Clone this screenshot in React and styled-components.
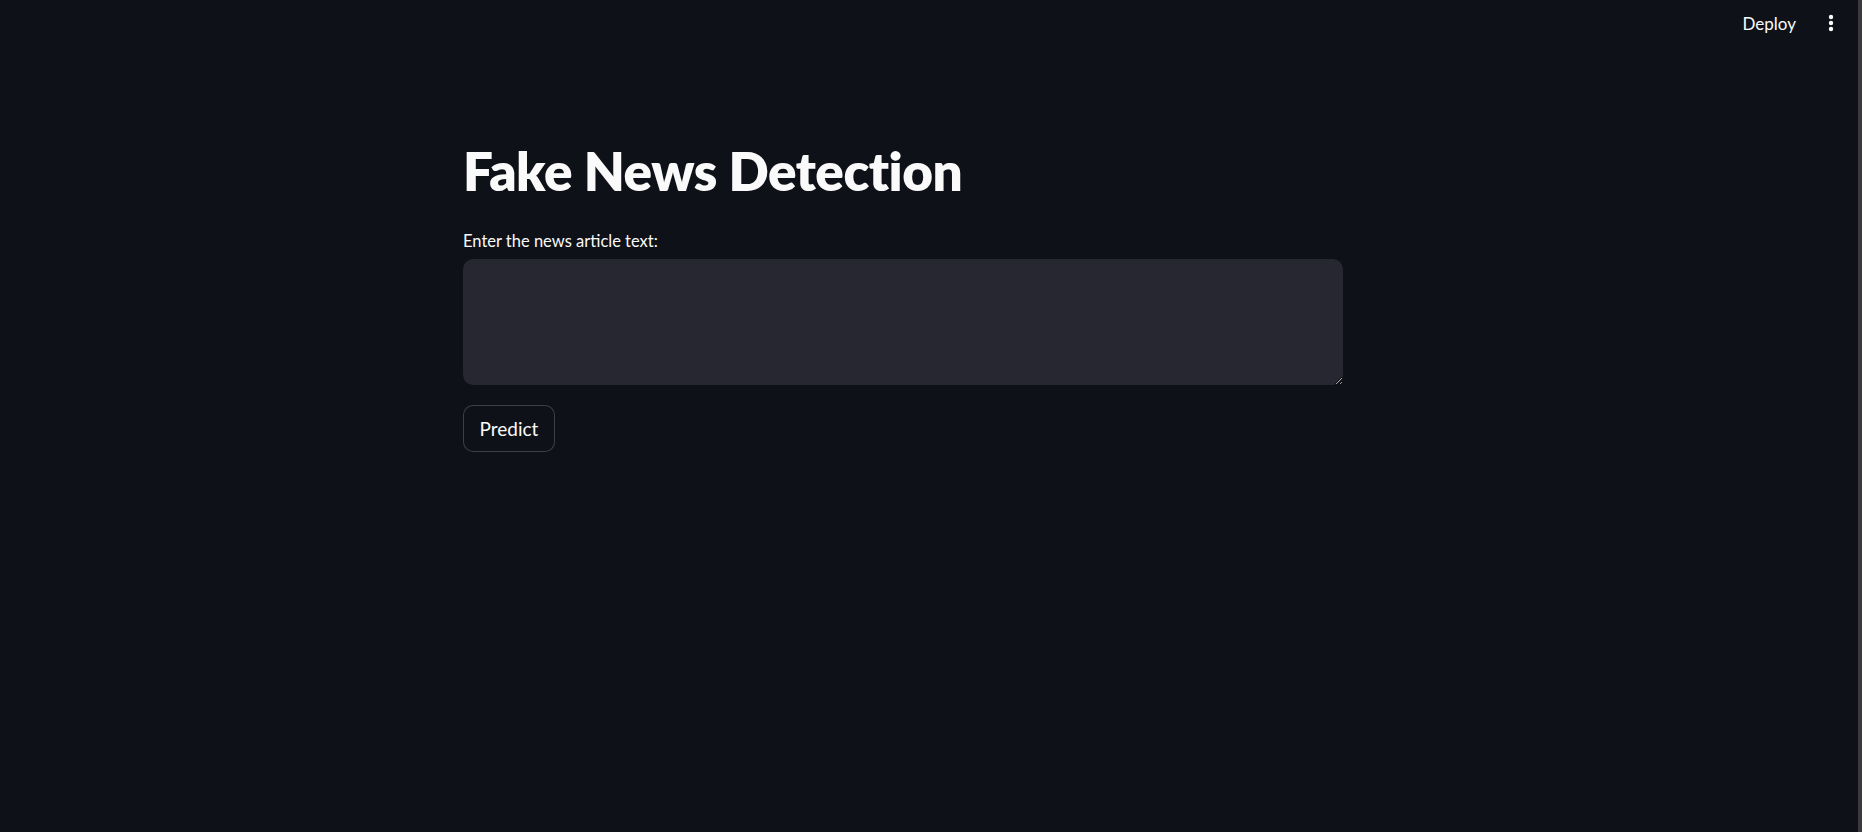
import React from "react";
import styled, { createGlobalStyle } from "styled-components";

const Global = createGlobalStyle`
  html, body { margin: 0; padding: 0; background: #0e1117; overflow: hidden; }
  body { font-family: "Lato", "Liberation Sans", sans-serif; color: #fafafa; }
  * { box-sizing: border-box; }
`;

const Shell = styled.div`
  display: flex;
  width: 1862px;
  height: 832px;
  background: #0e1117;
`;

const Page = styled.div`
  flex: 1;
  display: flex;
  flex-direction: column;
`;

const Scrollbar = styled.div`
  width: 4px;
  background: #3a3a3c;
`;

const Header = styled.header`
  height: 46px;
  display: flex;
  align-items: center;
  justify-content: flex-end;
  padding-right: 24px;
  gap: 32px;
`;

const DeployButton = styled.button`
  background: transparent;
  border: none;
  color: #fafafa;
  font-family: "Lato", sans-serif;
  font-size: 17px;
  padding: 0;
  cursor: pointer;
`;

const MenuButton = styled.button`
  background: transparent;
  border: none;
  padding: 0;
  display: flex;
  color: #fafafa;
`;

const Main = styled.main`
  display: flex;
  justify-content: center;
  padding-right: 52px;
`;

const Block = styled.div`
  width: 880px;
  display: flex;
  flex-direction: column;
`;

const Title = styled.h1`
  margin: 94px 0 0;
  font-family: "Lato", sans-serif;
  font-weight: 800;
  font-size: 53px;
  line-height: 62px;
  letter-spacing: -0.5px;
  color: #fafafa;
`;

const Label = styled.label`
  margin-top: 27px;
  font-size: 16.5px;
  line-height: 24px;
  color: #fafafa;
`;

const TextArea = styled.textarea`
  margin-top: 6px;
  height: 126px;
  width: 100%;
  background: #262730;
  border: none;
  border-radius: 10px;
  color: #fafafa;
  resize: vertical;
  outline: none;
  font-family: "Lato", sans-serif;
  font-size: 17px;
  padding: 14px;
`;

const Button = styled.button`
  margin-top: 20px;
  align-self: flex-start;
  width: 92px;
  height: 47px;
  background: #0e1117;
  border: 1px solid rgba(250, 250, 250, 0.2);
  border-radius: 10px;
  color: #fafafa;
  font-family: "Lato", sans-serif;
  font-size: 19px;
  cursor: pointer;
`;

export default function App() {
  return (
    <>
      <Global />
      <Shell>
        <Page>
          <Header>
            <DeployButton>Deploy</DeployButton>
            <MenuButton aria-label="menu">
              <svg width="6" height="18" viewBox="0 0 6 18">
                <circle cx="3" cy="3" r="2.2" fill="#fafafa" />
                <circle cx="3" cy="9" r="2.2" fill="#fafafa" />
                <circle cx="3" cy="15" r="2.2" fill="#fafafa" />
              </svg>
            </MenuButton>
          </Header>
          <Main>
            <Block>
              <Title>Fake News Detection</Title>
              <Label>Enter the news article text:</Label>
              <TextArea />
              <Button>Predict</Button>
            </Block>
          </Main>
        </Page>
        <Scrollbar />
      </Shell>
    </>
  );
}
